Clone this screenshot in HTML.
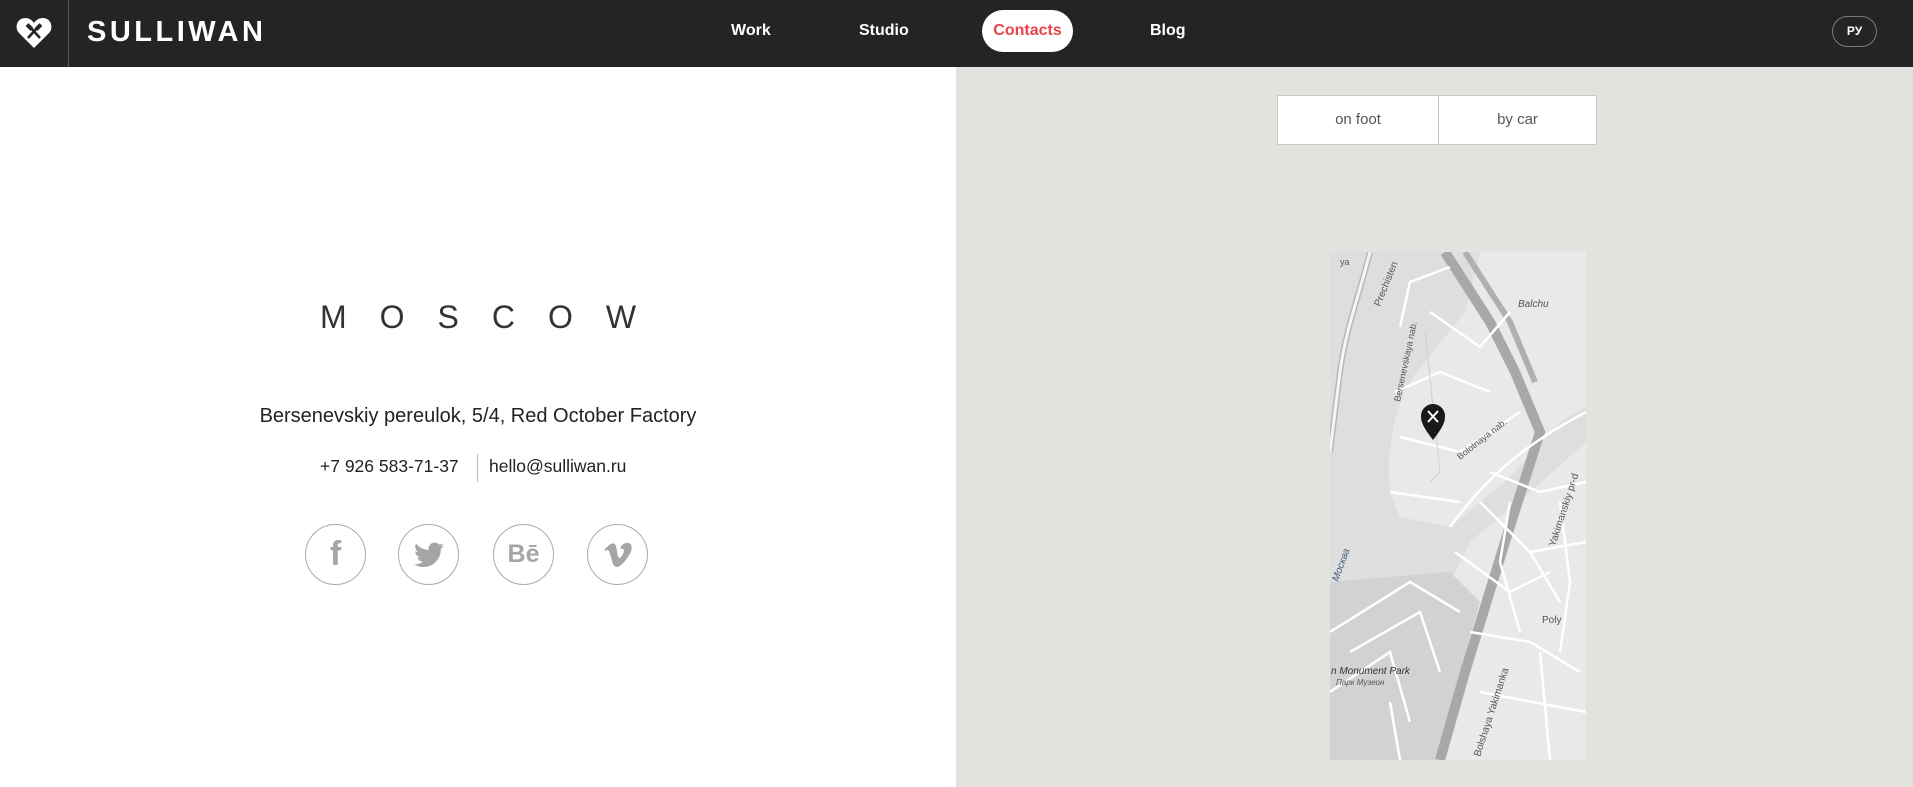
<!DOCTYPE html>
<html><head><meta charset="utf-8">
<style>
*{margin:0;padding:0;box-sizing:border-box}
body{width:1913px;height:787px;overflow:hidden;font-family:"Liberation Sans",sans-serif;background:#fff;position:relative}
.hdr{position:absolute;left:0;top:0;width:1913px;height:67px;background:#242424}
.div{position:absolute;left:68px;top:0;width:1px;height:67px;background:#5a5a5a}
.logo{position:absolute;left:87px;top:15px;color:#fff;font-size:29px;font-weight:bold;letter-spacing:3.5px;line-height:34px}
.nav{position:absolute;top:0;height:67px;line-height:62px;color:#fff;font-weight:bold;font-size:16px}
.pill{position:absolute;left:982px;top:10px;width:91px;height:42px;border-radius:21px;background:#fff;color:#e8424c;font-size:16px;font-weight:bold;text-align:center;line-height:42px}
.ru{position:absolute;left:1832px;top:16px;width:45px;height:31px;border:1.5px solid #7a7a7a;border-radius:16px;color:#fff;font-size:12px;font-weight:bold;text-align:center;line-height:28px}
.right{position:absolute;left:956px;top:67px;width:957px;height:720px;background:#e3e2de}
.btns{position:absolute;left:1277px;top:95px;width:320px;height:50px;background:#fff;border:1px solid #c9c9c9;display:flex}
.btns div{flex:1;text-align:center;line-height:48px;font-size:15px;color:#555}
.btns div:first-child{border-right:1px solid #c9c9c9;flex:0 0 161px}
.moscow{position:absolute;left:0;width:956px;top:299px;text-align:center;font-size:32px;letter-spacing:33px;text-indent:33px;color:#333;font-weight:normal}
.addr{position:absolute;left:0;width:956px;top:405px;text-align:center;font-size:20px;color:#222}
.ph{position:absolute;top:456px;font-size:17.5px;color:#222}
.sep{position:absolute;left:477px;top:454px;width:1px;height:28px;background:#bbb}
.ic{position:absolute;top:524px;width:61px;height:61px;border:1.5px solid #aaa;border-radius:50%;color:#a5a5a5;text-align:center;font-weight:bold}
</style></head><body>
<div class="hdr">
<svg style="position:absolute;left:16px;top:17px" width="36" height="31" viewBox="0 0 36 31"><path d="M18 31 L3 16 C-2 11 1 1 9 1 C13 1 16 3 18 6 C20 3 23 1 27 1 C35 1 38 11 33 16 Z" fill="#fff"/><g stroke="#242424" stroke-width="2.6"><line x1="12" y1="21" x2="22" y2="10"/><line x1="24" y1="21" x2="14" y2="10"/></g><rect x="10" y="8" width="7" height="4" fill="#242424" transform="rotate(45 13.5 10)"/><rect x="19" y="8" width="7" height="4" fill="#242424" transform="rotate(-45 22.5 10)"/></svg>
<div class="div"></div>
<div class="logo">SULLIWAN</div>
<div class="nav" style="left:731px">Work</div>
<div class="nav" style="left:859px">Studio</div>
<div class="pill">Contacts</div>
<div class="nav" style="left:1150px">Blog</div>
<div class="ru">РУ</div>
</div>
<div class="moscow">MOSCOW</div>
<div class="addr">Bersenevskiy pereulok, 5/4, Red October Factory</div>
<div class="ph" style="left:320px">+7 926 583-71-37</div>
<div class="sep"></div>
<div class="ph" style="left:489px">hello@sulliwan.ru</div>
<div class="ic" style="left:305px;font-size:34px;line-height:58px;font-family:'Liberation Sans'">f</div>
<div class="ic" style="left:398px"><svg width="30" height="26" viewBox="0 0 24 20" style="margin-top:17px"><path d="M24 2.4c-.9.4-1.8.6-2.8.8 1-.6 1.8-1.6 2.2-2.7-1 .6-2 1-3.1 1.2C19.3.7 18 0 16.6 0c-2.700 0-4.9 2.200-4.9 4.900 0 .4 0 .8.1 1.100C7.700 5.800 4.100 3.900 1.700.9c-.4.7-.7 1.600-.7 2.500 0 1.700.9 3.200 2.200 4.100-.8 0-1.600-.2-2.200-.6v.1c0 2.400 1.700 4.400 3.900 4.800-.4.1-.8.2-1.300.2-.3 0-.6 0-.9-.1.6 2 2.400 3.400 4.600 3.400-1.700 1.300-3.800 2.100-6.100 2.100H0c2.200 1.400 4.800 2.200 7.500 2.200 9.100 0 14-7.500 14-14v-.6c1-.7 1.800-1.600 2.500-2.600z" fill="#a5a5a5"/></svg></div>
<div class="ic" style="left:493px;font-size:25px;line-height:58px">Bē</div>
<div class="ic" style="left:587px"><svg width="28" height="24" viewBox="0 0 24 21" style="margin-top:18px"><path d="M23.9 4.9c-.1 2.3-1.7 5.5-4.9 9.6C15.8 18.8 13 21 10.7 21c-1.4 0-2.6-1.3-3.6-4L5.1 9.8C4.4 7.2 3.6 5.9 2.8 5.9c-.2 0-.8.4-1.9 1.1L0 5.6c1.2-1 2.3-2.1 3.5-3.1C5.1 1.1 6.3.4 7.1.3c1.9-.2 3 1.1 3.5 3.8.5 2.9.8 4.7 1 5.5.5 2.4 1.1 3.6 1.7 3.6.5 0 1.3-.8 2.3-2.4 1-1.6 1.6-2.8 1.6-3.7.1-1.4-.4-2.1-1.6-2.1-.6 0-1.1.1-1.7.4C15 1.4 17.2-.1 20.6 0c2.4.1 3.5 1.7 3.3 4.9z" fill="#a5a5a5"/></svg></div>
<div class="right"></div>
<div class="btns"><div>on foot</div><div>by car</div></div>
<svg style="position:absolute;left:1330px;top:252px" width="256" height="508" viewBox="0 0 256 508">
<rect width="256" height="508" fill="#e9e9e9"/>
<path d="M60 0 L150 0 L135 60 L95 110 C65 140 55 200 60 240 L70 265 L120 275 L180 225 L230 170 L256 155 L256 190 L200 240 L140 290 L120 330 L60 330 L0 380 L0 0 Z" fill="#dedede"/>
<path d="M0 330 L120 320 L150 350 L130 420 L110 508 L0 508 Z" fill="#d2d2d2"/>
<path d="M40 0 C30 40 15 80 10 120 L0 200" stroke="#b8b8b8" stroke-width="6" fill="none"/>
<path d="M40 0 C30 40 15 80 10 120 L0 200" stroke="#f5f5f5" stroke-width="3" fill="none"/>
<path d="M115 0 L160 70 L185 120 L210 180 L175 290 L135 420 L110 508" stroke="#a8a8a8" stroke-width="10" fill="none"/>
<path d="M135 0 L180 70 L205 130" stroke="#b0b0b0" stroke-width="6" fill="none"/>
<g stroke="#fff" stroke-width="2.5" fill="none">
<path d="M70 75 L80 30 L120 15"/><path d="M100 60 L150 95 L180 60"/><path d="M65 140 L110 120 L160 140"/><path d="M70 185 L130 200 L190 160"/>
<path d="M60 240 L130 250"/><path d="M120 275 C160 220 200 190 256 160"/><path d="M150 250 L200 300 L230 350"/>
<path d="M125 300 L180 340 L220 320"/><path d="M160 220 L210 240 L256 230"/><path d="M200 300 L256 290"/>
<path d="M0 380 L80 330 L130 360"/><path d="M20 400 L90 360 L110 420"/><path d="M0 440 L60 400 L80 470"/>
<path d="M140 380 L200 390 L250 420"/><path d="M150 440 L256 460"/><path d="M210 400 L220 508"/><path d="M60 450 L70 508"/>
<path d="M180 250 L170 310 L190 380"/><path d="M230 250 L240 330 L230 400"/>
</g>
<path d="M95 80 L110 220 L100 230" stroke="#cfcfcf" stroke-width="1" fill="none"/>
<g font-family="Liberation Sans" font-size="9" fill="#555">
<text x="10" y="13">ya</text><text x="188" y="55" font-style="italic" font-size="10">Balchu</text>
<text x="1" y="422" font-style="italic" font-size="10" fill="#333">n Monument Park</text>
<text x="6" y="433" font-style="italic" font-size="8">Парк Музеон</text>
<text x="212" y="371" font-size="10">Poly</text>
<text transform="translate(225,295) rotate(-72)" font-size="10">Yakimanskiy pr-d</text>
<text transform="translate(150,505) rotate(-72)" font-size="10">Bolshaya Yakimanka</text>
<text transform="translate(70,150) rotate(-78)">Bersenevskaya nab.</text>
<text transform="translate(130,208) rotate(-38)">Bolotnaya nab.</text>
<text transform="translate(50,55) rotate(-68)" font-size="10">Prechisten</text>
<text transform="translate(8,330) rotate(-70)" font-style="italic" fill="#48607a" font-size="10">Москва</text>
</g>
<path d="M103 188 C93 175 91 170 91 164 C91 157 97 152 103 152 C109 152 115 157 115 164 C115 170 113 175 103 188 Z" fill="#1a1a1a"/>
<g stroke="#fff" stroke-width="2"><line x1="98" y1="170" x2="108" y2="159"/><line x1="108" y1="170" x2="98" y2="159"/></g>
</svg>
</body></html>
